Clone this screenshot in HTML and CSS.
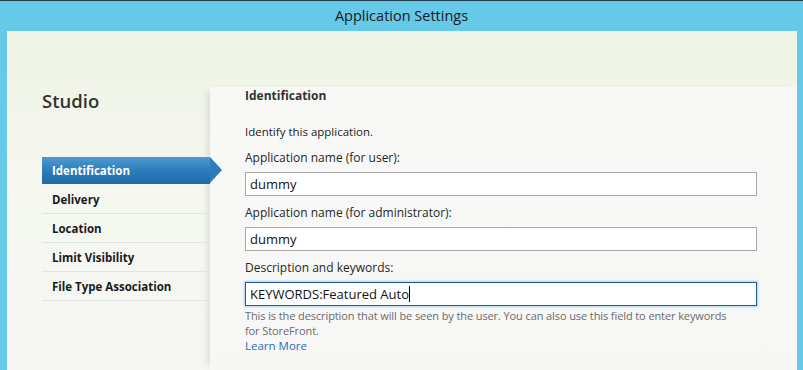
FILE: index.html
```html
<!DOCTYPE html>
<html lang="en">
  <head>
    <meta charset="UTF-8" />
    <meta name="viewport" content="width=device-width, initial-scale=1.0" />
    <title>Application Settings</title>
    <link rel="stylesheet" href="styles.css">
  </head>

  <body>
    <div class="titlebar">Application Settings</div>

    <div class="frame">
      <div class="sidebar">
        <h1 class="brand">Studio</h1>
        <ul class="nav">
          <li class="nav-item active">Identification</li>
          <li class="nav-item">Delivery</li>
          <li class="nav-item">Location</li>
          <li class="nav-item">Limit Visibility</li>
          <li class="nav-item">File Type Association</li>
        </ul>
      </div>

      <div class="main">
        <h2 class="section-title">Identification</h2>
        <p class="intro">Identify this application.</p>

        <div class="field">
          <label class="field-label">Application name (for user):</label>
          <div class="input">dummy</div>
        </div>

        <div class="field">
          <label class="field-label">Application name (for administrator):</label>
          <div class="input">dummy</div>
        </div>

        <div class="field">
          <label class="field-label">Description and keywords:</label>
          <div class="input focused">KEYWORDS:Featured Auto<span class="caret"></span></div>
          <p class="help">This is the description that will be seen by the user. You can also use this field to enter keywords for StoreFront.</p>
          <a class="learn-more" href="#">Learn More</a>
        </div>
      </div>
    </div>
  </body>
</html>
```

FILE: styles.css
```css
body {
  margin: 0;
  height: 370px;
  background-color: #66c9e8;
  border-top: 1px solid #1d3b4b;
  box-sizing: border-box;
  font-family: "Open Sans", "Noto Sans", sans-serif;
  display: flex;
  flex-direction: column;
  overflow: hidden;
}

.titlebar {
  height: 30px;
  line-height: 30px;
  text-align: center;
  font-size: 14.5px;
  color: #1a1a1a;
}

.frame {
  flex: 1;
  display: flex;
  margin: 0 6px 0 7px;
  background: linear-gradient(to bottom, #eef3e4 0%, #f5f7f0 40%, #f7f7f5 100%);
}

.sidebar {
  width: 203px;
  padding-top: 58px;
  position: relative;
  z-index: 1;
}

.brand {
  margin: 0 0 44px 35px;
  font-size: 18.5px;
  font-weight: 600;
  color: #333;
  line-height: 24px;
}

.nav {
  list-style: none;
  margin: 0 0 0 35px;
  padding: 0;
}

.nav-item {
  height: 28px;
  line-height: 30px;
  padding-left: 10px;
  font-size: 11.5px;
  font-weight: 700;
  color: #1a1a1a;
  border-bottom: 1px solid #e2e4e0;
}

.nav-item.active {
  position: relative;
  height: 27px;
  line-height: 27px;
  margin-bottom: 1px;
  border-bottom: none;
  color: #fff;
  background: linear-gradient(to bottom, #4d9bd0 0%, #2b7dbb 50%, #1f6ca6 100%);
}

.nav-item.active::after {
  content: "";
  position: absolute;
  right: -12px;
  top: 0;
  border-top: 13.5px solid transparent;
  border-bottom: 13.5px solid transparent;
  border-left: 12px solid #2b7dbb;
}

.main {
  flex: 1;
  margin-top: 56px;
  padding: 0 40px 0 35px;
  background: linear-gradient(to bottom, #f8f9f6, #f7f7f6);
  box-shadow: -6px 0 8px -4px rgba(0, 0, 0, 0.12);
}

.section-title {
  margin: 0;
  font-size: 12px;
  font-weight: 700;
  color: #333;
  line-height: 18px;
}

.intro {
  margin: 18px 0 0;
  font-size: 11.5px;
  color: #222;
  line-height: 18px;
}

.field {
  margin-top: 8px;
}

.field-label {
  display: block;
  font-size: 12px;
  font-weight: 500;
  color: #262626;
  line-height: 18px;
  margin-bottom: 5px;
}

.input {
  height: 22px;
  line-height: 22px;
  border: 1px solid #a9a9a9;
  background-color: #fff;
  padding-left: 4px;
  font-size: 13px;
  color: #111;
}

.input.focused {
  border-color: #1f5b8f;
  box-shadow: 0 0 2px 1px #a9d2ec;
  margin-bottom: 2px;
}

.caret {
  display: inline-block;
  width: 1px;
  height: 16px;
  background-color: #000;
  vertical-align: -3px;
}

.help {
  margin: 0;
  max-width: 488px;
  font-size: 11px;
  letter-spacing: -0.1px;
  color: #6b6b6b;
  line-height: 15px;
}

.learn-more {
  display: block;
  font-size: 11.5px;
  color: #2a6ebd;
  text-decoration: none;
  line-height: 15px;
}
```
